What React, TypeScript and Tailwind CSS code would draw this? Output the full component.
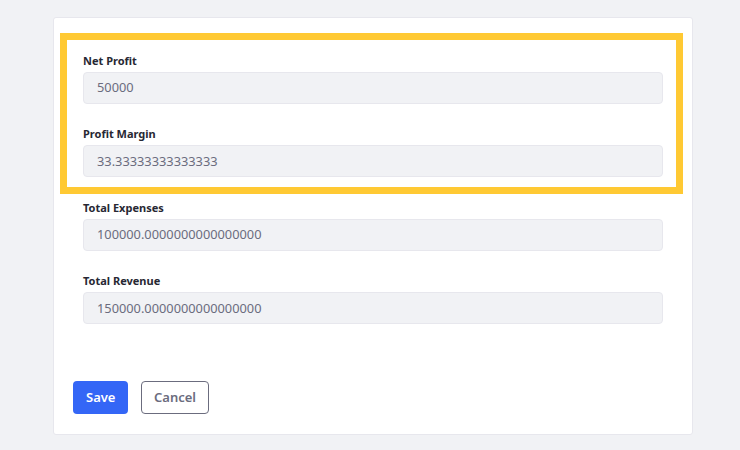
import React from 'react';

const fields = [
  { label: 'Net Profit', value: '50000' },
  { label: 'Profit Margin', value: '33.33333333333333' },
  { label: 'Total Expenses', value: '100000.0000000000000000' },
  { label: 'Total Revenue', value: '150000.0000000000000000' },
];

const Field: React.FC<{ label: string; value: string }> = ({ label, value }) => (
  <div className="mb-[19.4px]">
    <label className="block text-[11px] leading-[21px] font-bold text-[#272833] mb-[1px]">{label}</label>
    <div className="h-[32px] flex items-center px-[13px] bg-[#f1f2f5] border border-[#e7e7ed] rounded-[4px] text-[12.8px] text-[#6b6c7e]">
      {value}
    </div>
  </div>
);

const App: React.FC = () => {
  return (
    <div className="w-[740px] h-[450px] bg-[#f1f2f5] pt-[17px] pl-[53px]" style={{ fontFamily: '"Noto Sans", sans-serif' }}>
      <div className="relative w-[640px] bg-white border border-[#e7e7ed] rounded-[3px] h-[418px]">
        <div className="pt-[32px] px-[29px]">
          {fields.map((f) => (
            <Field key={f.label} label={f.label} value={f.value} />
          ))}
        </div>

        <div className="flex gap-[13px] px-[19px] mt-[57px]">
          <button className="h-[33px] px-[13px] rounded-[4px] bg-[#3466f6] text-white text-[13px] font-semibold">Save</button>
          <button className="h-[33px] px-[11.5px] rounded-[4px] border border-[#6b6c7e] bg-white text-[#6b6c7e] text-[13px] font-semibold">Cancel</button>
        </div>

        {/* highlight overlay */}
        <div className="absolute left-[6px] top-[15px] w-[623px] h-[161px] border-[7px] border-[#ffc933] pointer-events-none" />
      </div>
    </div>
  );
};

export default App;
